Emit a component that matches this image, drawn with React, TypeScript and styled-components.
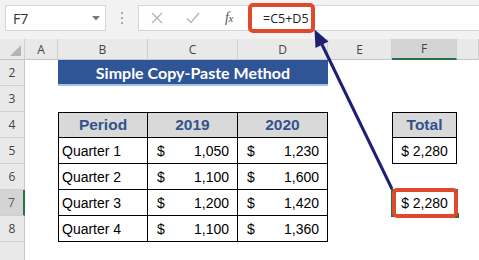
import React from "react";
import styled, { createGlobalStyle } from "styled-components";

const GlobalStyle = createGlobalStyle`
  html, body {
    margin: 0;
    padding: 0;
    background: #ffffff;
    overflow: hidden;
  }
  body {
    font-family: "Liberation Sans", Arial, sans-serif;
  }
`;

const Window = styled.div`
  position: relative;
  width: 479px;
  height: 260px;
  overflow: hidden;
  background: #ffffff;
`;

/* ---------- formula bar ---------- */

const Toolbar = styled.div`
  height: 39px;
  box-sizing: border-box;
  padding: 5px 0 0 5px;
  background: #f2f2f2;
  display: flex;
  align-items: flex-start;
`;

const NameBox = styled.div`
  width: 101px;
  height: 26px;
  box-sizing: border-box;
  background: #ffffff;
  border: 1px solid #d6d6d6;
  display: flex;
  align-items: center;
  justify-content: space-between;
  padding: 0 5px 0 7px;
  font: 14px "Open Sans", sans-serif;
  color: #333333;
`;

const Dots = styled.div`
  width: 32px;
  height: 26px;
  display: flex;
  flex-direction: column;
  align-items: center;
  justify-content: center;
  gap: 3px;

  span {
    width: 2px;
    height: 2px;
    background: #a8a8a8;
  }
`;

const FormulaBox = styled.div`
  flex: 1;
  height: 26px;
  box-sizing: border-box;
  background: #ffffff;
  border: 1px solid #d6d6d6;
  border-right: none;
  display: flex;
  align-items: center;
`;

const IconSlot = styled.div`
  width: 36px;
  height: 100%;
  display: flex;
  align-items: center;
  justify-content: center;
`;

const Fx = styled.span`
  font: italic 14px "Liberation Serif", serif;
  color: #555555;
  letter-spacing: -0.5px;

  sub {
    font-size: 11px;
    vertical-align: baseline;
  }
`;

const FormulaText = styled.div`
  position: relative;
  height: 100%;
  display: flex;
  align-items: center;
  padding-left: 16px;
  font: 12.5px "Open Sans", sans-serif;
  color: #222222;
`;

const RedFrame = styled.div<{ $t: number; $l: number; $r: number; $b: number }>`
  position: absolute;
  top: ${(p) => p.$t}px;
  left: ${(p) => p.$l}px;
  right: ${(p) => p.$r}px;
  bottom: ${(p) => p.$b}px;
  border: 4px solid #df4a2b;
  border-radius: 5px;
  pointer-events: none;
  z-index: 3;
`;

/* ---------- sheet grid ---------- */

const Sheet = styled.div`
  display: grid;
  grid-template-columns: 25px 33px 90px 90px 90px 64px 65px 1fr;
  grid-template-rows: 21px repeat(8, 26px);
`;

const ColHead = styled.div<{ $selected?: boolean }>`
  display: flex;
  align-items: center;
  justify-content: center;
  box-sizing: border-box;
  background: ${(p) => (p.$selected ? "#d4d4d4" : "#e9e9e9")};
  border-right: 1px solid #d0d0d0;
  border-bottom: ${(p) => (p.$selected ? "2px solid #217346" : "1px solid #c6c6c6")};
  font: 12px "Open Sans", sans-serif;
  color: #444444;
`;

const Corner = styled(ColHead)`
  align-items: flex-end;
  justify-content: flex-end;
  padding: 0 3px 3px 0;
`;

const RowHead = styled.div<{ $row: number; $selected?: boolean }>`
  grid-column: 1;
  grid-row: ${(p) => p.$row};
  display: flex;
  align-items: center;
  justify-content: center;
  box-sizing: border-box;
  background: ${(p) => (p.$selected ? "#d4d4d4" : "#e9e9e9")};
  border-bottom: 1px solid #d0d0d0;
  border-right: ${(p) => (p.$selected ? "2px solid #217346" : "1px solid #c6c6c6")};
  font: 12px "Open Sans", sans-serif;
  color: ${(p) => (p.$selected ? "#5a5a5a" : "#444444")};
`;

const Title = styled.div`
  grid-column: 3 / 6;
  grid-row: 2;
  display: flex;
  align-items: center;
  justify-content: center;
  box-sizing: border-box;
  background: #2f5597;
  border-bottom: 2px solid #9dc3e6;
  font: 700 16px Lato, "Open Sans", sans-serif;
  color: #ffffff;
`;

const Cell = styled.div<{ $col: number; $row: number; $top?: boolean; $left?: boolean }>`
  grid-column: ${(p) => p.$col};
  grid-row: ${(p) => p.$row};
  position: relative;
  display: flex;
  align-items: center;
  box-sizing: border-box;
  border-right: 1px solid #000000;
  border-bottom: 1px solid #000000;
  border-top: ${(p) => (p.$top ? "1px solid #000000" : "none")};
  border-left: ${(p) => (p.$left ? "1px solid #000000" : "none")};
  font: 14px "Liberation Sans", Arial, sans-serif;
  color: #000000;
`;

const HeadCell = styled(Cell)`
  justify-content: center;
  background: #d9d9d9;
  font-weight: 700;
  font-size: 15.5px;
  color: #34538c;
`;

const TextCell = styled(Cell)`
  padding-left: 3px;
`;

const MoneyCell = styled(Cell)`
  justify-content: space-between;
  padding: 0 8px 0 9px;
`;

const TotalCell = styled(Cell)`
  justify-content: center;
`;

const PickedCell = styled(Cell)`
  justify-content: center;
  border: none;
`;

const Selection = styled.div`
  position: absolute;
  inset: -1px;
  border: 2px solid #217346;
  pointer-events: none;

  &::after {
    content: "";
    position: absolute;
    right: -4px;
    bottom: -4px;
    width: 5px;
    height: 5px;
    background: #217346;
    border: 1px solid #ffffff;
  }
`;

const Arrow = styled.svg`
  position: absolute;
  left: 0;
  top: 0;
  z-index: 4;
  pointer-events: none;
`;

const quarters: [string, number, number][] = [
  ["Quarter 1", 1050, 1230],
  ["Quarter 2", 1100, 1600],
  ["Quarter 3", 1200, 1420],
  ["Quarter 4", 1100, 1360],
];

const fmt = (n: number) => n.toLocaleString("en-US");

const columns = ["A", "B", "C", "D", "E", "F", ""];

export default function App() {
  return (
    <Window>
      <GlobalStyle />
      <Toolbar>
        <NameBox>
          <span>F7</span>
          <svg width="8" height="5" viewBox="0 0 8 5">
            <polygon points="0,0 8,0 4,4.5" fill="#7a7a7a" />
          </svg>
        </NameBox>
        <Dots>
          <span />
          <span />
          <span />
        </Dots>
        <FormulaBox>
          <IconSlot>
            <svg width="12" height="12" viewBox="0 0 12 12">
              <path d="M1 1 L11 11 M11 1 L1 11" stroke="#b4b4b4" strokeWidth="1.4" />
            </svg>
          </IconSlot>
          <IconSlot>
            <svg width="14" height="12" viewBox="0 0 14 12">
              <path d="M1 6.5 L5 10.5 L13 1" stroke="#b4b4b4" strokeWidth="1.4" fill="none" />
            </svg>
          </IconSlot>
          <IconSlot>
            <Fx>
              f<sub>x</sub>
            </Fx>
          </IconSlot>
          <FormulaText>
            =C5+D5
            <RedFrame $t={-3} $l={1} $r={-6} $b={-3} />
          </FormulaText>
        </FormulaBox>
      </Toolbar>

      <Sheet>
        <Corner>
          <svg width="11" height="11" viewBox="0 0 11 11">
            <polygon points="11,0 11,11 0,11" fill="#b5b5b5" />
          </svg>
        </Corner>
        {columns.map((c, i) => (
          <ColHead key={i} $selected={c === "F"}>
            {c}
          </ColHead>
        ))}

        {[2, 3, 4, 5, 6, 7, 8, 9].map((r) => (
          <RowHead key={r} $row={r} $selected={r === 7}>
            {r < 9 ? r : ""}
          </RowHead>
        ))}

        <Title>Simple Copy-Paste Method</Title>

        <HeadCell $col={3} $row={4} $top $left>
          Period
        </HeadCell>
        <HeadCell $col={4} $row={4} $top>
          2019
        </HeadCell>
        <HeadCell $col={5} $row={4} $top>
          2020
        </HeadCell>
        {quarters.map(([name, a, b], i) => (
          <React.Fragment key={name}>
            <TextCell $col={3} $row={5 + i} $left>
              {name}
            </TextCell>
            <MoneyCell $col={4} $row={5 + i}>
              <span>$</span>
              <span>{fmt(a)}</span>
            </MoneyCell>
            <MoneyCell $col={5} $row={5 + i}>
              <span>$</span>
              <span>{fmt(b)}</span>
            </MoneyCell>
          </React.Fragment>
        ))}

        <HeadCell $col={7} $row={4} $top $left>
          Total
        </HeadCell>
        <TotalCell $col={7} $row={5} $left>
          $ 2,280
        </TotalCell>

        <PickedCell $col={7} $row={7}>
          $ 2,280
          <Selection />
          <RedFrame $t={-2} $l={0} $r={-1} $b={-2} />
        </PickedCell>
      </Sheet>

      <Arrow width="479" height="260" viewBox="0 0 479 260">
        <line x1="392" y1="189" x2="322" y2="44.5" stroke="#1c1f72" strokeWidth="3" />
        <polygon points="314.5,29.5 328.5,41.5 315.5,48" fill="#1c1f72" />
      </Arrow>
    </Window>
  );
}
